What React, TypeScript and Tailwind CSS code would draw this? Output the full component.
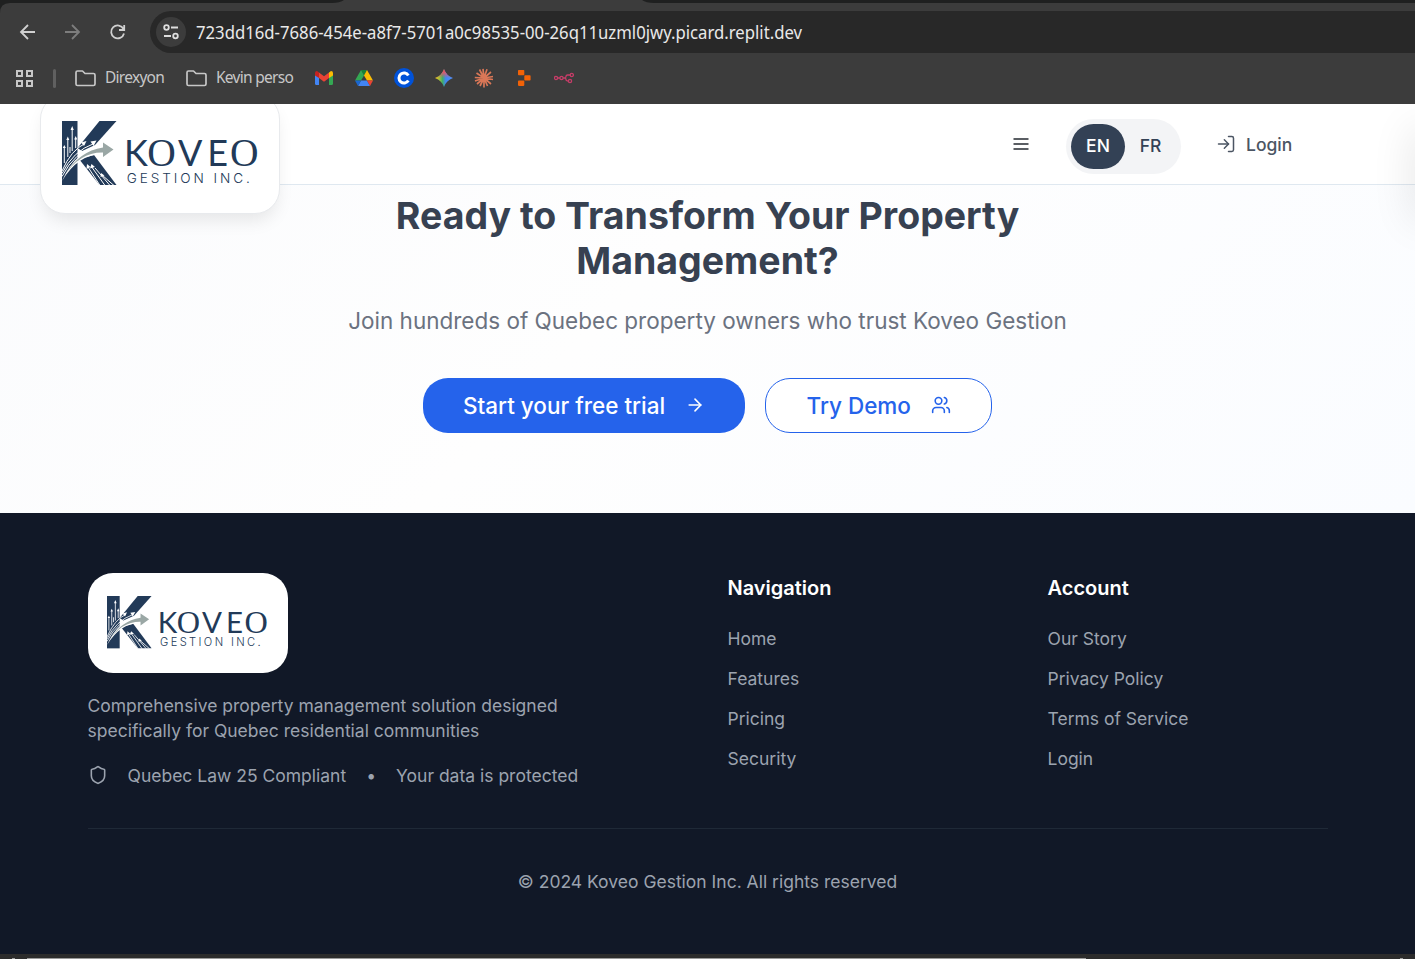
import React from "react";
import { Users, ArrowRight, LogIn, Shield } from "lucide-react";

function KoveoLogo({ className }: { className: string }) {
  return (
    <svg viewBox="0 0 198 66" className={className} fill="none">
      <g fill="#223a58">
        <path d="M0 0H15.500V64H0Z" />
        <path d="M37.500 0H54.500L33 24L20 30L15.500 27Z" />
        <path d="M17 38L32 34L54.500 64H37.500Z" />
      </g>
      <path d="M0 60Q14 28 41 25V20L53 28.500L41 37.500V33Q16 33 0 60Z" fill="#fff" />
      <g stroke="#fff" strokeWidth="1">
        <path d="M10.200 30V7M5.800 36V18M2.300 42V26M13.700 27V17M8 32V26" />
        <path d="M0 50Q9 29 23 22.500M0 52.500Q11 30 32 22.500M0 55.500Q13 30 34 26" />
        <path d="M26 46L38 64.500M29 45L43 64.500M33 47L48 64.500M40 54L52 64.500" />
      </g>
      <g fill="#fff">
        <path d="M10.200 5L8.600 9H11.800ZM5.800 15.500L4.300 19H7.300ZM2.300 24L.8 27H3.800ZM13.700 15L12.200 18.500H15.200Z" />
        <path d="M34.500 19.500L28.500 20.500L31.500 25ZM24.500 20L19 21.500L22 25ZM25 43L24.500 48L28.500 46ZM29.500 43L28 47.500L33 46ZM39 52L38.500 56L42.500 54.500Z" />
      </g>
      <path d="M2 55Q17 30 41 26.500V21.500L51.500 28.500L41 36V31.500Q18 31 2 55Z" fill="#9aa7a5" />
      <text y="45" fontFamily="Lato, sans-serif" fontSize="36" fill="#223a58">
        <tspan x="62">K</tspan>
        <tspan x="85.300" fontFamily="'Liberation Serif', serif" fontSize="39.500">O</tspan>
        <tspan x="116" fontFamily="Lato, sans-serif">V</tspan>
        <tspan x="145.300" fontFamily="Lato, sans-serif">E</tspan>
        <tspan x="168" fontFamily="'Liberation Serif', serif" fontSize="39.500">O</tspan>
      </text>
      <text x="64.800" y="61.600" textLength="123" fontFamily="Inter, sans-serif" fontWeight="300" fontSize="13.600" fill="#223a58">GESTION INC.</text>
    </svg>
  );
}

function Folder() {
  return (
    <svg className="h-[17px] w-[21px] shrink-0" viewBox="0 0 21 17" fill="none" stroke="#c7c7c7" strokeWidth="1.700" strokeLinejoin="round">
      <path d="M1 2.500Q1 1 2.500 1H7.500L10 3.500H18.500Q20 3.500 20 5V14Q20 15.500 18.500 15.500H2.500Q1 15.500 1 14Z" />
    </svg>
  );
}

function BookmarkIcons() {
  return (
    <div className="flex items-center gap-5">
      <svg className="size-5" viewBox="0 0 20 20">
        <path d="M1 6V15.500Q1 17 2.500 17H5V8Z" fill="#4285f4" />
        <path d="M19 6V15.500Q19 17 17.500 17H15V8Z" fill="#34a853" />
        <path d="M1 7.500V5Q1 3 3 3L5 4.500V10Z" fill="#c5221f" />
        <path d="M5 4.500L10 8.300L15 4.500V10L10 13.700L5 10Z" fill="#ea4335" />
        <path d="M15 4.500L17 3Q19 3 19 5V7.500L15 10Z" fill="#fbbc04" />
      </svg>
      <svg className="size-5" viewBox="0 0 20 20">
        <path d="M7 2H13L10 7.500Z" fill="#188038" />
        <path d="M7 2L10 7.500L7 12.500H1Z" fill="#34a853" />
        <path d="M13 2L19 12.500H13L10 7.500Z" fill="#fbbc04" />
        <path d="M7 12.500H13L16 18H4Z" fill="#4285f4" />
        <path d="M1 12.500H7L4 18Z" fill="#1967d2" />
        <path d="M13 12.500H19L16 18Z" fill="#ea4335" />
      </svg>
      <svg className="size-5" viewBox="0 0 20 20">
        <circle cx="10" cy="10" r="10" fill="#0052d9" />
        <path d="M14.300 7.500A5 5 0 1 0 14.300 12.500" fill="none" stroke="#fff" strokeWidth="3" />
      </svg>
      <svg className="size-5" viewBox="0 0 20 20">
        <defs>
          <linearGradient id="spark" x1="1" y1="10" x2="19" y2="10" gradientUnits="userSpaceOnUse">
            <stop stopColor="#f6c012" /><stop offset=".25" stopColor="#9fbf40" /><stop offset=".42" stopColor="#3fad68" /><stop offset=".6" stopColor="#4285f4" /><stop offset="1" stopColor="#4b90f5" />
          </linearGradient>
          <linearGradient id="sparkTop" x1="10" y1="1" x2="10" y2="10" gradientUnits="userSpaceOnUse">
            <stop stopColor="#ef4545" /><stop offset=".4" stopColor="#d65b70" /><stop offset="1" stopColor="#d65b70" stopOpacity="0" />
          </linearGradient>
        </defs>
        <path d="M10 1Q12.300 7.700 19 10Q12.300 12.300 10 19Q7.700 12.300 1 10Q7.700 7.700 10 1Z" fill="url(#spark)" />
        <path d="M10 1Q12.300 7.700 19 10Q12.300 12.300 10 19Q7.700 12.300 1 10Q7.700 7.700 10 1Z" fill="url(#sparkTop)" />
      </svg>
      <svg className="size-5" viewBox="0 0 20 20" stroke="#d97757" strokeWidth="1.700">
        <path d="M10 10L9 .8M10 10L13 1.200M10 10L17 4M10 10L19 8.500M10 10L19 11.500M10 10L17 16M10 10L13.500 18M10 10L10 19.500M10 10L6 18M10 10L3 16M10 10L1 13M10 10L.8 9.500M10 10L2.500 5M10 10L5.500 1.500" />
      </svg>
      <svg className="size-5" viewBox="0 0 20 20" fill="#f26207">
        <rect x="4" y="2" width="6.300" height="5.300" rx=".8" />
        <rect x="10.300" y="7.300" width="6.300" height="5.300" rx=".8" />
        <rect x="4" y="12.600" width="6.300" height="5.300" rx=".8" />
      </svg>
      <svg className="size-5" viewBox="0 0 20 20" fill="none" stroke="#c63d68" strokeWidth="1.300">
        <circle cx="2" cy="10" r="1.600" /><circle cx="7.500" cy="10" r="1.600" /><circle cx="17.800" cy="7" r="1.600" /><circle cx="16" cy="13" r="1.600" />
        <path d="M3.600 10H5.900M9.100 10H10.500Q12 10 12 8.500Q12 7 13.500 7H16.200M10.500 10Q12 10 12 11.500Q12 13 14.400 13" />
      </svg>
    </div>
  );
}

function BrowserChrome() {
  return (
    <header className="h-[104px] shrink-0 bg-[#1f2020] font-['Noto_Sans',sans-serif]">
      <div className="h-full bg-[#3c3c3c] pt-[11px] [clip-path:path('M0_104V13Q0_3_10_3H332Q340_3_344_0H642Q646_3_654_3H1415V104Z')]">
        <div className="flex h-[42px] items-center pl-[18px]">
          <svg className="h-5 w-[110px] shrink-0" viewBox="0 0 110 20" fill="none" strokeWidth="1.800">
            <path d="M17 10H3M10 3L3 10L10 17" stroke="#d0d0d0" />
            <path d="M47 10H61M54 3L61 10L54 17" stroke="#7d7d7d" />
            <path d="M105.500 7A6.500 6.500 0 1 0 106 11.500M106.200 3V8H101" stroke="#d0d0d0" />
          </svg>
          <div className="ml-[22px] flex h-[42px] flex-1 items-center rounded-l-full bg-[#282828] pl-[6px]">
            <div className="flex size-[30px] items-center justify-center rounded-full bg-[#3c3c3c]">
              <svg className="size-[18px]" viewBox="0 0 18 18" fill="none" stroke="#dedede" strokeWidth="1.800">
                <circle cx="4.500" cy="4.500" r="2.300" /><circle cx="13.500" cy="13" r="2.300" /><path d="M9 4.500H16M2 13H9" />
              </svg>
            </div>
            <svg className="ml-[10px] h-8 w-[680px] overflow-visible" viewBox="0 0 680 32">
              <text x="0" y="22.500" textLength="606" lengthAdjust="spacingAndGlyphs" fontSize="18" fill="#e9e9e9">723dd16d-7686-454e-a8f7-5701a0c98535-00-26q11uzml0jwy.picard.replit.dev</text>
            </svg>
          </div>
        </div>
        <div className="flex h-[50px] items-center pl-[15px] text-[15.500px] text-[#c7c7c7]">
          <svg className="size-[19px]" viewBox="0 0 19 19" fill="none" stroke="#c7c7c7" strokeWidth="2">
            <path d="M2 2H7V7H2ZM12 2H17V7H12ZM2 12H7V17H2ZM12 12H17V17H12Z" />
          </svg>
          <div className="ml-[19px] h-[19px] w-[3px] rounded bg-[#606060]" />
          <div className="ml-[19px] flex w-[111px] items-center gap-[9px]"><Folder /><span className="tracking-[-.72px]">Direxyon</span></div>
          <div className="flex w-[128px] items-center gap-[9px]"><Folder /><span className="whitespace-nowrap tracking-[-.72px]">Kevin perso</span></div>
          <BookmarkIcons />
        </div>
      </div>
    </header>
  );
}

function LinkColumn({ title, links }: { title: string; links: string[] }) {
  return (
    <nav className="w-[320px] shrink-0">
      <h2 className="text-[20px] font-semibold leading-[30px] text-white">{title}</h2>
      <ul className="mt-[23px] flex flex-col gap-[15px]">
        {links.map((link) => <li key={link}><a href="#">{link}</a></li>)}
      </ul>
    </nav>
  );
}

export default function App() {
  return (
    <div className="flex h-[959px] w-[1415px] flex-col overflow-hidden bg-white font-[Inter,sans-serif]">
      <BrowserChrome />
      <main className="relative flex h-[409px] shrink-0 flex-col overflow-hidden bg-[linear-gradient(135deg,#fafbfd_0%,#fefefe_45%,#fafcff_100%)]">
        <div className="flex h-[81px] shrink-0 items-center border-b border-[#dfe8f0] bg-white pl-[1011px]">
          <svg className="size-5" viewBox="0 0 20 20" stroke="#252a31" strokeWidth="1.700"><path d="M2.500 5H17.500M2.500 10H17.500M2.500 15H17.500" /></svg>
          <div className="ml-[35px] mt-[5px] flex h-[55px] w-[115px] items-center rounded-full bg-[#f3f4f6] px-[5px] text-[17.500px] font-medium text-[#334155]">
            <span className="flex h-[45px] w-[54px] items-center justify-center rounded-[23px] bg-[#334155] text-white">EN</span>
            <span className="flex h-[45px] w-[51px] items-center justify-center">FR</span>
          </div>
          <LogIn className="ml-[35px] size-5 text-[#4b5563]" strokeWidth={1.8} />
          <span className="ml-[10px] mt-[2px] text-[17.500px] font-medium text-[#4b5563]">Login</span>
        </div>
        <div className="absolute -top-[10px] left-10 h-[120px] w-[240px] rounded-[25px] border border-[#e8eaed] bg-white pl-[21px] pt-[26px] shadow-[0_10px_18px_-4px_#00000018]">
          <KoveoLogo className="h-[66px] w-[198px]" />
        </div>
        <div className="absolute -right-[24px] top-[25px] h-[92px] w-[24px] shadow-[0_0_42px_#00000020]" />
        <section className="flex flex-col items-center pt-2 text-center">
          <h1 className="w-[720px] text-[37.500px] font-bold leading-[45px] text-[#374151]">Ready to Transform Your Property Management?</h1>
          <p className="mt-5 text-[22.500px] leading-[35px] text-[#6b7280]">Join hundreds of Quebec property owners who trust Koveo Gestion</p>
          <div className="mt-10 flex gap-5 text-[22.500px] font-medium">
            <button className="flex h-[55px] w-[322px] items-center rounded-[25px] bg-[#2563eb] pl-10 text-white">Start your free trial<ArrowRight className="-mt-[2px] ml-5 size-5" strokeWidth={1.9} /></button>
            <button className="flex h-[55px] w-[227px] items-center rounded-[25px] border border-[#2563eb] bg-white pl-[40.500px] text-[#2563eb]">Try Demo<Users className="-mt-[2px] ml-5 size-5" strokeWidth={1.9} /></button>
          </div>
        </section>
      </main>
      <footer className="h-[441px] shrink-0 bg-[#111827] pl-[87.500px] pt-[60px] text-[17.500px] leading-[25px] text-[#9ca3af]">
        <div className="flex h-[256px] w-[1240px] border-b border-[#1f2937]">
          <div className="w-[640px] shrink-0">
            <div className="flex h-[100px] w-[200px] justify-center rounded-[25px] bg-white pt-[23px]"><KoveoLogo className="h-[54px] w-[162px]" /></div>
            <p className="mt-5 w-[490px]">Comprehensive property management solution designed specifically for Quebec residential communities</p>
            <div className="mt-5 flex items-center"><Shield className="-mt-[2px] size-5" strokeWidth={1.9} /><span className="ml-5">Quebec Law 25 Compliant</span><span className="mx-5">•</span><span>Your data is protected</span></div>
          </div>
          <LinkColumn title="Navigation" links={["Home", "Features", "Pricing", "Security"]} />
          <LinkColumn title="Account" links={["Our Story", "Privacy Policy", "Terms of Service", "Login"]} />
        </div>
        <p className="mt-10 w-[1240px] text-center">© 2024 Koveo Gestion Inc. All rights reserved</p>
      </footer>
      <div className="flex h-[5px] shrink-0 items-end bg-[#2c2c2c] pl-3"><div className="h-px w-[3px] bg-[#999]" /><div className="ml-3 h-px w-[1059px] bg-[#999]" /><div className="ml-[314px] h-px w-[3px] bg-[#999]" /></div>
    </div>
  );
}
